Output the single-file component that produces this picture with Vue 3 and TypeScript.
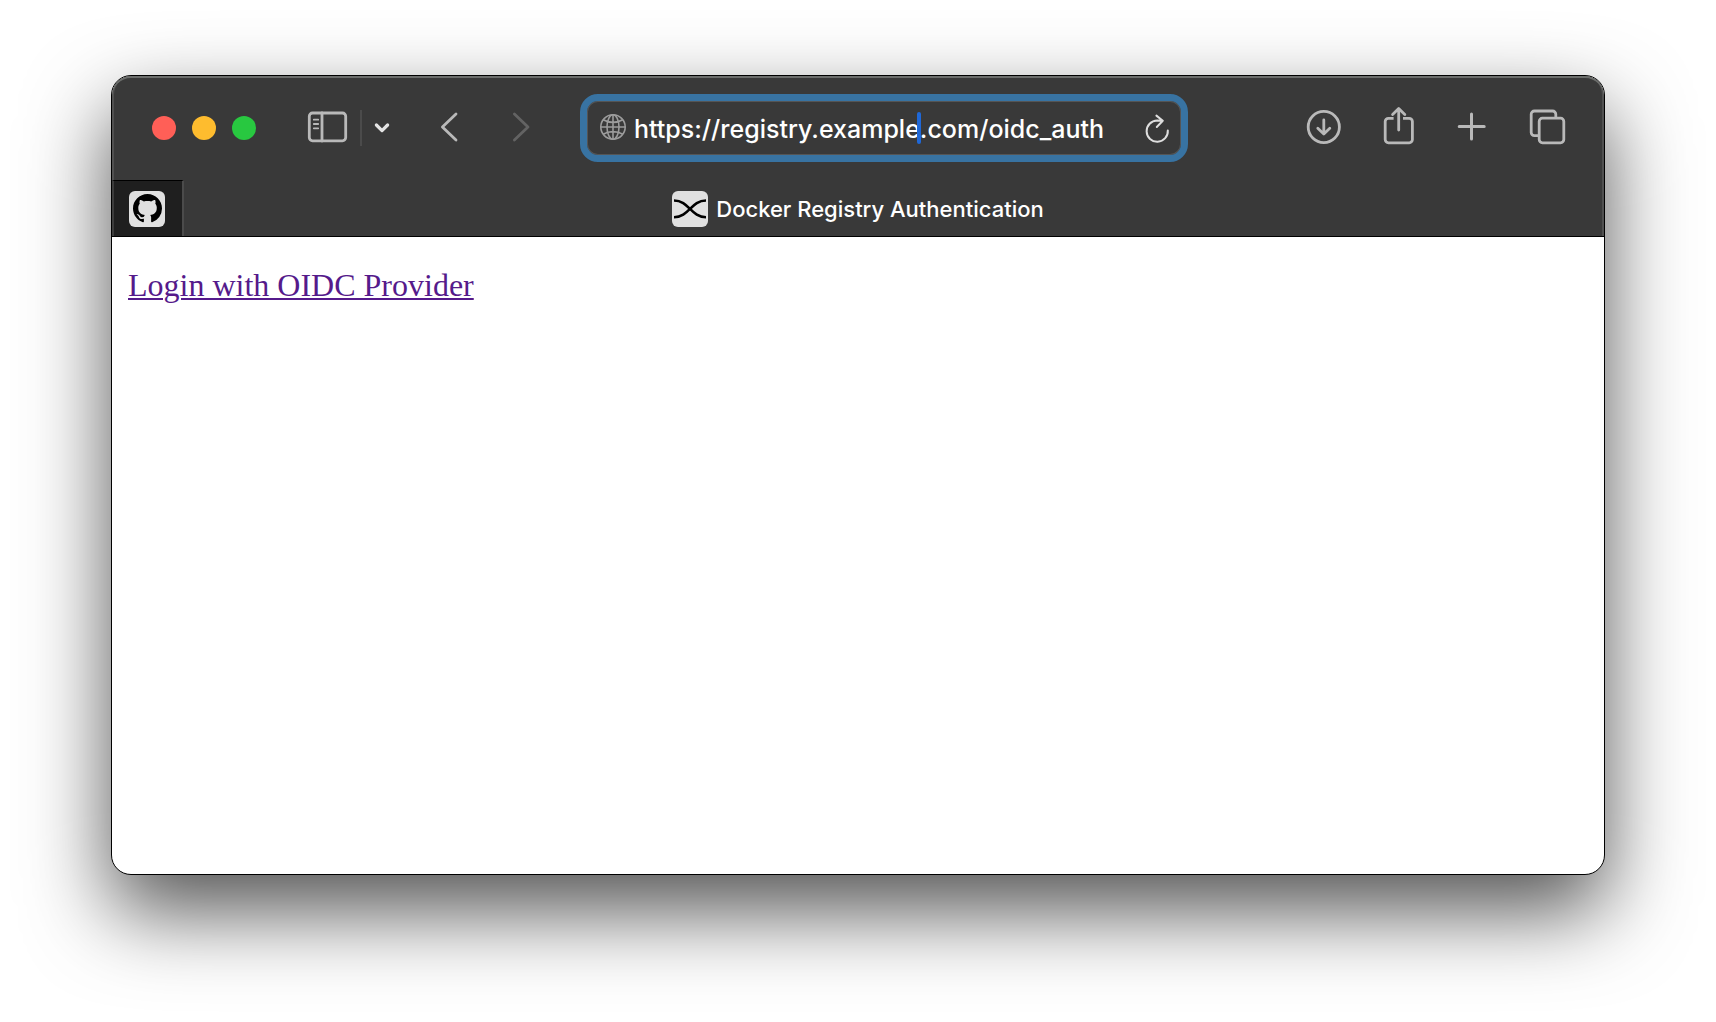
<script setup lang="ts">
import { ref } from 'vue'

const address = ref('https://registry.example.com/oidc_auth')
</script>

<template>
  <div class="desktop">
    <div class="window">
      <header class="chrome">
        <div class="toolbar">
          <div class="lights">
            <button class="light close" aria-label="Close"></button>
            <button class="light minimize" aria-label="Minimize"></button>
            <button class="light zoom" aria-label="Zoom"></button>
          </div>

          <div class="sidebar-group">
            <button class="tool" aria-label="Show sidebar">
              <svg viewBox="0 0 40 40" width="40" height="40">
                <rect x="1.3" y="5" width="36.4" height="27.8" rx="3.2" />
                <path d="M14 5v28" />
                <path class="thin" d="M5.8 11.7h4.4M5.8 16h4.4M5.8 20.3h4.4" />
              </svg>
            </button>
            <span class="divider"></span>
            <button class="tool narrow" aria-label="Tab groups">
              <svg viewBox="0 0 16 40" width="16" height="40">
                <path class="bright" d="M2.4 17l5.6 5.6 5.6-5.6" />
              </svg>
            </button>
          </div>

          <nav class="history">
            <button class="tool" aria-label="Back">
              <svg viewBox="0 0 40 40" width="40" height="40">
                <path d="M26 6L12.4 19 26 32" />
              </svg>
            </button>
            <button class="tool dim" aria-label="Forward">
              <svg viewBox="0 0 40 40" width="40" height="40">
                <path d="M12.4 6L26 19 12.4 32" />
              </svg>
            </button>
          </nav>

          <div class="address">
            <svg class="globe" viewBox="0 0 28 28" width="28" height="28">
              <circle cx="14" cy="13" r="12.2" />
              <ellipse cx="14" cy="13" rx="6" ry="12.2" />
              <path d="M14 .8v24.4M1.8 13h24.4M4.2 5.8c5.6 3.4 14 3.4 19.6 0M4.2 20.2c5.6-3.4 14-3.4 19.6 0" />
            </svg>
            <div class="field">
              <input v-model="address" type="text" aria-label="Address" spellcheck="false" />
              <span class="caret"></span>
            </div>
            <button class="reload" aria-label="Reload">
              <svg viewBox="0 0 28 28" width="28" height="28">
                <path d="M23.8 16.4A10.6 10.6 0 1 1 13.2 6.6L18.8 6.8M12.4 1.6l6.4 5.2-6 6.2" />
              </svg>
            </button>
          </div>

          <div class="actions">
            <button class="tool" aria-label="Downloads">
              <svg viewBox="0 0 40 40" width="40" height="40">
                <circle cx="17.8" cy="19" r="15.6" />
                <path d="M17.8 12v13.6M11.8 20.2l6 5.8 6-5.8" />
              </svg>
            </button>
            <button class="tool" aria-label="Share">
              <svg viewBox="0 0 40 40" width="40" height="40">
                <path d="M13.6 10.4H8.4a3.2 3.2 0 0 0-3.2 3.2v18a3.2 3.2 0 0 0 3.2 3.2h20.8a3.2 3.2 0 0 0 3.2-3.2v-18a3.2 3.2 0 0 0-3.2-3.2H23" stroke-linecap="butt" />
                <path d="M18.7 1v21M12.6 6.4L18.7.4l6.1 6" />
              </svg>
            </button>
            <button class="tool" aria-label="New tab">
              <svg viewBox="0 0 40 40" width="40" height="40">
                <path class="heavy" d="M17.5 6v25M5.2 18.5h25" />
              </svg>
            </button>
            <button class="tool" aria-label="Tab overview">
              <svg viewBox="0 0 40 40" width="40" height="40">
                <path d="M10.6 27.6H6.4a3.2 3.2 0 0 1-3.2-3.2V6.2A3.2 3.2 0 0 1 6.4 3h18.2a3.2 3.2 0 0 1 3.2 3.2v3.6" stroke-linecap="butt" />
                <rect x="11.2" y="10.2" width="24.6" height="24.6" rx="3.2" />
              </svg>
            </button>
          </div>
        </div>

        <div class="tabs">
          <button class="pinned" aria-label="GitHub">
            <span class="favicon">
              <svg viewBox="0 0 16 16" width="29" height="29">
                <path d="M8 0C3.58 0 0 3.58 0 8c0 3.54 2.29 6.53 5.47 7.59.4.07.55-.17.55-.38 0-.19-.01-.82-.01-1.49-2.01.37-2.53-.49-2.69-.94-.09-.23-.48-.94-.82-1.13-.28-.15-.68-.52-.01-.53.63-.01 1.08.58 1.23.82.72 1.21 1.87.87 2.33.66.07-.52.28-.87.51-1.07-1.78-.2-3.64-.89-3.64-3.95 0-.87.31-1.59.82-2.15-.08-.2-.36-1.02.08-2.12 0 0 .67-.21 2.2.82.64-.18 1.32-.27 2-.27s1.36.09 2 .27c1.53-1.04 2.2-.82 2.2-.82.44 1.1.16 1.92.08 2.12.51.56.82 1.27.82 2.15 0 3.07-1.87 3.75-3.65 3.95.29.25.54.73.54 1.48 0 1.07-.01 1.93-.01 2.2 0 .21.15.46.55.38A8.01 8.01 0 0 0 16 8c0-4.42-3.58-8-8-8z" />
              </svg>
            </span>
          </button>
          <button class="tab">
            <span class="favicon">
              <svg class="curves" viewBox="0 0 36 36" width="36" height="36">
                <path d="M2 9.5C17 9.5 19 26.3 34 26.3M2 26.3C17 26.3 19 9.5 34 9.5" />
              </svg>
            </span>
            <span>Docker Registry Authentication</span>
          </button>
        </div>
      </header>

      <main class="page">
        <a href="#">Login with OIDC Provider</a>
      </main>
    </div>
  </div>
</template>

<style>
body {
  margin: 0;
  background: #fff;
}
</style>

<style scoped>
.desktop {
  box-sizing: border-box;
  min-height: 100vh;
  padding: 75px 111px 147px;
  display: flex;
  flex-direction: column;
  overflow: hidden;
  font-family: Inter, "Liberation Sans", sans-serif;
}

.window {
  flex: 1;
  display: flex;
  flex-direction: column;
  overflow: hidden;
  border: 1px solid #000;
  border-radius: 20px;
  background: #fff;
  box-shadow: 0 36px 84px rgba(0, 0, 0, 0.68);
}

button {
  margin: 0;
  padding: 0;
  border: 0;
  background: none;
  color: inherit;
  font: inherit;
}

svg {
  display: block;
  overflow: visible;
}

.chrome {
  background: #393939;
  color: #fff;
  border-bottom: 1px solid #000;
  border-radius: 19px 19px 0 0;
  box-shadow: inset 0 2px 0 #6c6e6c, inset 2px 0 0 #505050, inset -2px 0 0 #505050;
}

.toolbar {
  display: flex;
  align-items: center;
  height: 104px;
  padding: 0 36px 0 40px;
}

.lights {
  display: flex;
  gap: 16px;
}

.light {
  width: 24px;
  height: 24px;
  border-radius: 50%;
}

.close {
  background: #ff5f57;
}

.minimize {
  background: #febc2e;
}

.zoom {
  background: #28c840;
}

.sidebar-group {
  display: flex;
  align-items: center;
  gap: 12px;
  margin-left: 52px;
}

.divider {
  width: 2px;
  height: 36px;
  background: #4b4b4b;
}

.tool svg {
  fill: none;
  stroke: #b9b9b9;
  stroke-width: 2.8;
  stroke-linecap: round;
  stroke-linejoin: round;
}

.tool.dim svg {
  stroke: #636363;
}

.tool .thin {
  stroke-width: 1.8;
}

.tool .heavy {
  stroke-width: 3;
}

.tool .bright {
  stroke: #e4e4e4;
  stroke-width: 3.2;
}

.history {
  display: flex;
  gap: 32px;
  margin-left: 40px;
}

.address {
  flex: 1;
  box-sizing: border-box;
  min-width: 0;
  height: 68px;
  margin: 0 118px 0 38px;
  padding: 0 9px 0 12px;
  display: flex;
  align-items: center;
  gap: 7px;
  border: 7px solid #3873a2;
  border-radius: 18px;
  box-shadow: inset 0 0 0 1px #555;
}

.globe {
  fill: none;
  stroke: #9c9c9c;
  stroke-width: 1.6;
}

.field {
  position: relative;
  flex: 1;
  min-width: 0;
}

.field input {
  display: block;
  box-sizing: border-box;
  width: 100%;
  height: 36px;
  padding: 2px 0 0;
  border: 0;
  outline: 0;
  background: none;
  color: #fff;
  font: 500 25px/34px Inter, "Liberation Sans", sans-serif;
}

.caret {
  position: absolute;
  left: 283px;
  top: 2px;
  width: 4px;
  height: 32px;
  border-radius: 2px;
  background: #1f68d8;
}

.reload svg {
  fill: none;
  stroke: #dedede;
  stroke-width: 2;
  stroke-linecap: round;
  stroke-linejoin: round;
}

.actions {
  display: flex;
  gap: 34px;
}

.tabs {
  display: grid;
  grid-template-columns: 72px 1fr 72px;
  height: 56px;
}

.pinned {
  display: flex;
  align-items: center;
  justify-content: center;
  padding-right: 2px;
  border-top: 1px solid #000;
  border-left: 2px solid #3c3c3c;
  border-right: 2px solid #4b4b4b;
  background: #1f1f1f;
}

.tab {
  display: flex;
  align-items: center;
  justify-content: center;
  gap: 8px;
  padding-top: 2px;
  font-size: 22px;
  font-weight: 500;
  line-height: 28px;
  white-space: nowrap;
}

.favicon {
  display: flex;
  align-items: center;
  justify-content: center;
  width: 36px;
  height: 36px;
  border-radius: 6px;
  background: #e0e0e0;
}

.curves {
  fill: none;
  stroke: #000;
  stroke-width: 2.6;
}

.page {
  flex: 1;
  padding: 30px 16px;
  font: 32px/36px "Liberation Serif", serif;
}

.page a {
  color: #551a8b;
  text-decoration-thickness: 2px;
  text-underline-offset: 2px;
}
</style>
